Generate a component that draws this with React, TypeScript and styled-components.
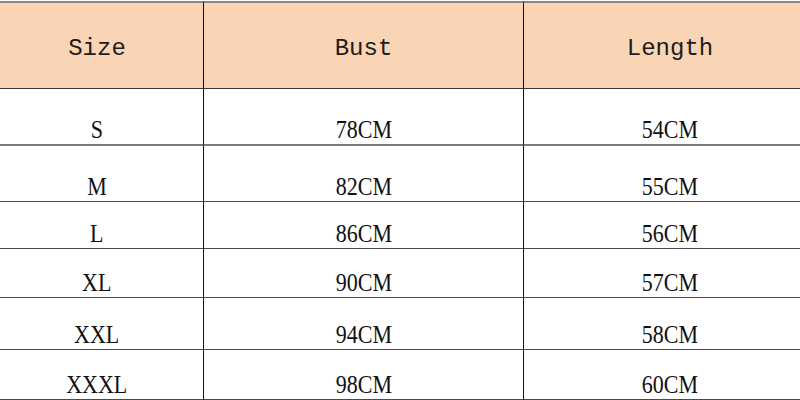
import styled, { createGlobalStyle } from 'styled-components'

const GlobalStyle = createGlobalStyle`
  html, body {
    margin: 0;
    padding: 0;
    background: #ffffff;
    overflow: hidden;
  }
`;

const Page = styled.div`
  width: 800px;
  height: 400px;
  overflow: hidden;
  padding-top: 1px;
  box-sizing: border-box;
`;

const Table = styled.table`
  margin-left: -9px;
  width: 825px;
  table-layout: fixed;
  border-collapse: separate;
  border-spacing: 0;
`;

const Row = styled.tr<{ $h: number }>`
  height: ${(p) => p.$h}px;
`;

const HeadCell = styled.th<{ $last?: boolean }>`
  position: relative;
  box-sizing: border-box;
  background: #fad5b5;
  border-top: 2px solid #8d8783;
  border-bottom: 1px solid #3a3a3a;
  border-right: ${(p) => (p.$last ? 'none' : '1px solid #111')};
  padding: 6px 0 0;
  vertical-align: middle;
  text-align: center;
  font-family: "Liberation Mono", "DejaVu Sans Mono", monospace;
  font-weight: normal;
  font-size: 24px;
  color: #1c1c1c;
`;

const Cell = styled.td<{ $last?: boolean; $thick?: boolean }>`
  box-sizing: border-box;
  border-bottom: ${(p) => (p.$thick ? '2px solid #7a7a7a' : '1px solid #4a4a4a')};
  border-right: ${(p) => (p.$last ? 'none' : '1px solid #111')};
  padding: 0;
  vertical-align: bottom;
  text-align: center;
  line-height: 23px;
`;

const Value = styled.span`
  display: inline-block;
  font-family: "Liberation Serif", "Times New Roman", serif;
  font-size: 25px;
  color: #111;
  transform: scaleX(0.88);
`;

const Marker = styled.span`
  position: absolute;
  top: 0;
  right: -4px;
  width: 0;
  height: 0;
  border-top: 4px solid #1f8a2a;
  border-left: 4px solid transparent;
`;

const rows = [
  { size: 'S', bust: '78CM', length: '54CM', h: 57, thick: true },
  { size: 'M', bust: '82CM', length: '55CM', h: 56 },
  { size: 'L', bust: '86CM', length: '56CM', h: 47 },
  { size: 'XL', bust: '90CM', length: '57CM', h: 49 },
  { size: 'XXL', bust: '94CM', length: '58CM', h: 52 },
  { size: 'XXXL', bust: '98CM', length: '60CM', h: 50 },
];

export default function App() {
  return (
    <Page>
      <GlobalStyle />
      <Table>
        <colgroup>
          <col style={{ width: 213 }} />
          <col style={{ width: 320 }} />
          <col style={{ width: 292 }} />
        </colgroup>
        <thead>
          <Row $h={88}>
            <HeadCell>Size</HeadCell>
            <HeadCell>
              Bust
              <Marker />
            </HeadCell>
            <HeadCell $last>Length</HeadCell>
          </Row>
        </thead>
        <tbody>
          {rows.map((r) => (
            <Row key={r.size} $h={r.h}>
              <Cell $thick={r.thick}><Value>{r.size}</Value></Cell>
              <Cell $thick={r.thick}><Value>{r.bust}</Value></Cell>
              <Cell $thick={r.thick} $last><Value>{r.length}</Value></Cell>
            </Row>
          ))}
        </tbody>
      </Table>
    </Page>
  )
}
